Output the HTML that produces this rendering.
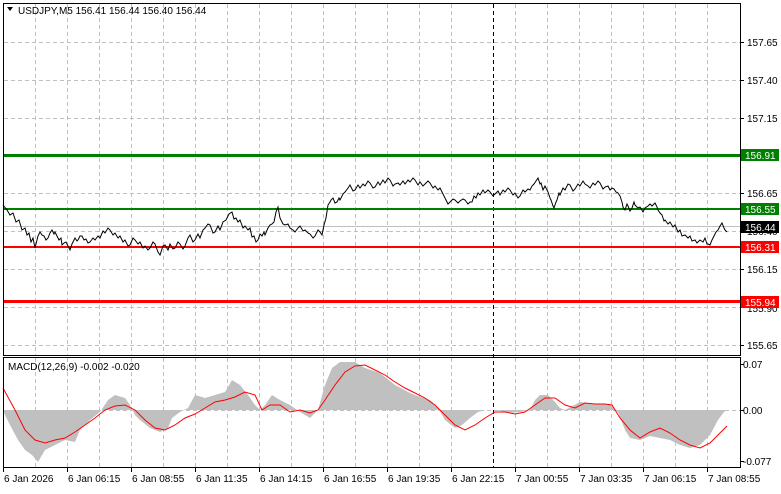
<!DOCTYPE html>
<html><head><style>
html,body{margin:0;padding:0;background:#fff;}
svg text{font-family:"Liberation Sans",sans-serif;font-size:10px;}
</style></head><body>
<svg width="781" height="489" viewBox="0 0 781 489" xmlns="http://www.w3.org/2000/svg">
<rect width="781" height="489" fill="#fff"/>
<g stroke="#c0c0c0" stroke-dasharray="4,3" stroke-width="1">
<path d="M35.5 4V355M67.5 4V355M99.5 4V355M131.5 4V355M163.5 4V355M195.5 4V355M227.5 4V355M259.5 4V355M291.5 4V355M323.5 4V355M355.5 4V355M387.5 4V355M419.5 4V355M451.5 4V355M515.5 4V355M547.5 4V355M579.5 4V355M611.5 4V355M643.5 4V355M675.5 4V355M707.5 4V355"/>
<path d="M35.5 358V467M67.5 358V467M99.5 358V467M131.5 358V467M163.5 358V467M195.5 358V467M227.5 358V467M259.5 358V467M291.5 358V467M323.5 358V467M355.5 358V467M387.5 358V467M419.5 358V467M451.5 358V467M515.5 358V467M547.5 358V467M579.5 358V467M611.5 358V467M643.5 358V467M675.5 358V467M707.5 358V467"/>
<path d="M4 42.5H740M4 80.5H740M4 118.5H740M4 155.5H740M4 193.5H740M4 231.5H740M4 269.5H740M4 307.5H740M4 345.5H740M4 410.5H740"/>
</g>
<path d="M493.5 4V467" stroke="#000" stroke-dasharray="4,3"/>
<path d="M4 226.5H740" stroke="#c0c0c0"/>
<path d="M4 155.5H740" stroke="#008000" stroke-width="3"/>
<path d="M4 209H740" stroke="#008000" stroke-width="2"/>
<path d="M4 247H740" stroke="#ff0000" stroke-width="2"/>
<path d="M4 301.5H740" stroke="#ff0000" stroke-width="3"/>
<polyline fill="none" stroke="#000" stroke-width="1" points="3,205 7,210 10,215 13,213 16,222 19,220 22,230 25,228 27,235 29,233 31,242 33,238 35,248 38,236 40,232 42,235 44,236 46,240 48,238 50,233 52,230 54,234 55,232 57,236 59,240 61,238 62,245 64,243 66,242 68,246 70,250 72,244 75,238 77,241 78,240 80,236 82,236 84,240 86,239 88,243 90,242 93,238 95,240 98,236 100,238 103,231 105,233 108,228 110,230 113,235 115,233 118,238 120,236 123,242 125,240 128,246 130,245 133,238 135,240 138,244 140,242 143,248 145,246 148,250 150,248 153,242 155,244 158,252 160,255 163,246 165,245 168,250 170,244 173,249 175,248 178,242 180,244 183,249 185,246 188,238 190,235 193,242 195,240 198,234 200,238 203,230 205,228 208,224 210,225 213,233 215,232 218,226 220,230 223,222 226,220 229,214 232,212 234,219 236,218 238,222 240,220 243,228 245,226 248,230 250,228 252,237 254,236 256,242 258,240 260,234 262,236 264,232 265,235 268,228 270,225 272,224 274,222 276,212 278,207 280,218 281,220 283,224 285,225 288,224 290,228 293,230 295,232 298,228 300,226 303,231 305,230 308,233 310,234 313,238 315,236 318,230 320,232 322,235 324,225 326,218 328,205 330,202 331,200 333,198 335,203 337,202 339,198 340,200 343,194 345,192 348,188 350,185 353,191 355,190 358,185 360,188 363,184 365,186 368,181 370,183 373,188 375,187 378,182 380,185 383,180 385,183 388,178 390,180 393,186 395,184 398,183 400,185 403,181 405,184 408,180 410,182 413,178 415,180 418,185 420,182 423,186 425,184 428,181 430,183 433,188 435,186 438,190 440,188 443,194 446,200 448,204 450,202 453,199 455,200 458,203 460,201 463,199 465,200 468,204 470,202 472,202 474,196 476,198 478,193 480,195 483,190 485,193 488,190 490,192 493,196 495,194 498,191 500,195 503,190 505,192 508,188 510,190 513,195 515,193 518,198 520,196 523,190 525,192 528,189 530,190 532,186 534,184 536,181 538,178 540,184 541,183 543,190 545,186 546,188 548,192 550,198 551,200 553,206 554,208 556,202 557,200 559,193 560,195 563,188 565,190 568,184 570,185 573,191 575,189 578,184 580,186 583,181 585,184 588,186 590,188 593,183 595,185 598,181 600,183 603,189 605,187 608,186 610,190 612,188 614,189 616,192 618,193 620,196 622,202 623,207 625,210 627,204 628,206 630,211 632,208 634,202 635,205 638,208 640,207 643,212 645,208 648,206 650,204 652,206 655,203 657,207 658,210 660,213 662,215 664,221 665,220 668,224 670,222 673,227 675,225 678,232 680,230 682,236 685,235 688,238 690,236 692,241 695,240 697,243 700,240 703,242 705,238 707,244 708,244 710,245 712,240 714,236 716,232 718,230 720,226 722,223 724,228 725,230 727,232"/>
<polygon fill="#c0c0c0" points="3,410 5,415 10,425 18,440 25,450 32,455 38,462 45,450 55,445 65,440 75,442 80,430 90,420 100,412 108,400 115,395 125,398 130,405 135,415 140,420 150,428 160,432 168,428 172,418 180,412 188,408 195,395 205,398 215,395 225,392 232,380 240,385 248,395 255,405 260,410 265,405 272,395 280,400 290,405 300,412 310,418 318,410 325,385 332,368 340,362 355,362 365,368 380,373 395,385 410,393 420,397 430,400 438,408 445,420 455,428 462,425 470,418 478,412 486,410 495,410 510,413 520,412 530,410 535,400 540,395 548,395 555,402 560,408 565,410 580,402 595,404 610,404 618,412 625,430 630,438 640,440 650,436 660,438 670,440 680,445 690,448 700,445 710,435 718,420 724,412 727,410"/>
<polyline fill="none" stroke="#ff0000" stroke-width="1" points="3,388 15,410 25,430 35,440 45,443 55,440 65,438 75,432 85,425 95,418 105,410 115,406 125,405 135,410 145,420 155,428 165,430 175,425 185,418 195,414 205,408 215,402 225,400 235,397 245,392 255,395 262,410 270,405 280,405 290,412 300,410 310,413 318,410 325,400 335,385 345,372 355,366 365,365 375,370 385,375 395,382 405,388 415,393 425,398 435,405 445,415 455,425 465,430 475,425 485,418 495,412 505,412 515,414 525,412 535,405 545,398 555,398 565,405 575,408 585,403 595,404 605,404 612,405 620,418 630,430 640,438 650,432 660,428 670,433 680,440 690,445 700,448 710,443 718,435 727,426"/>
<rect x="3.5" y="3.5" width="737" height="352" fill="none" stroke="#000"/>
<rect x="3.5" y="357.5" width="737" height="110" fill="none" stroke="#000"/>
<g stroke="#000"><path d="M740 42.5h4M740 80.5h4M740 118.5h4M740 193.5h4M740 269.5h4M740 345.5h4M740 364.5h4M740 410.5h4M740 461.5h4"/>
<path d="M3.5 467v5M67.5 467v5M131.5 467v5M195.5 467v5M259.5 467v5M323.5 467v5M387.5 467v5M451.5 467v5M515.5 467v5M579.5 467v5M643.5 467v5M707.5 467v5"/></g>
<g fill="#000">
<text x="747" y="46">157.65</text><text x="747" y="84">157.40</text><text x="747" y="122">157.15</text>
<text x="747" y="197">156.65</text><text x="747" y="235">156.40</text><text x="747" y="273">156.15</text>
<text x="747" y="312">155.90</text><text x="747" y="349">155.65</text>
<text x="743" y="368">0.07</text><text x="743" y="414">0.00</text><text x="743" y="465">-0.077</text>
</g>
<rect x="741" y="149" width="38" height="12" fill="#008000"/><text x="745" y="159" fill="#fff">156.91</text>
<rect x="741" y="203" width="38" height="12" fill="#008000"/><text x="745" y="213" fill="#fff">156.55</text>
<rect x="741" y="221" width="38" height="12" fill="#000"/><text x="745" y="231" fill="#fff">156.44</text>
<rect x="741" y="241" width="38" height="12" fill="#ff0000"/><text x="745" y="251" fill="#fff">156.31</text>
<rect x="741" y="296" width="38" height="12" fill="#ff0000"/><text x="745" y="306" fill="#fff">155.94</text>
<g fill="#000">
<text x="4" y="482">6 Jan 2026</text><text x="68" y="482">6 Jan 06:15</text><text x="132" y="482">6 Jan 08:55</text>
<text x="196" y="482">6 Jan 11:35</text><text x="260" y="482">6 Jan 14:15</text><text x="324" y="482">6 Jan 16:55</text>
<text x="388" y="482">6 Jan 19:35</text><text x="452" y="482">6 Jan 22:15</text><text x="516" y="482">7 Jan 00:55</text>
<text x="580" y="482">7 Jan 03:35</text><text x="644" y="482">7 Jan 06:15</text><text x="708" y="482">7 Jan 08:55</text>
<text x="8" y="370">MACD(12,26,9) -0.002 -0.020</text>
<polygon points="7,7 13,7 10,11"/>
<text x="18" y="14">USDJPY,M5  156.41 156.44 156.40 156.44</text>
</g>
</svg>
</body></html>
